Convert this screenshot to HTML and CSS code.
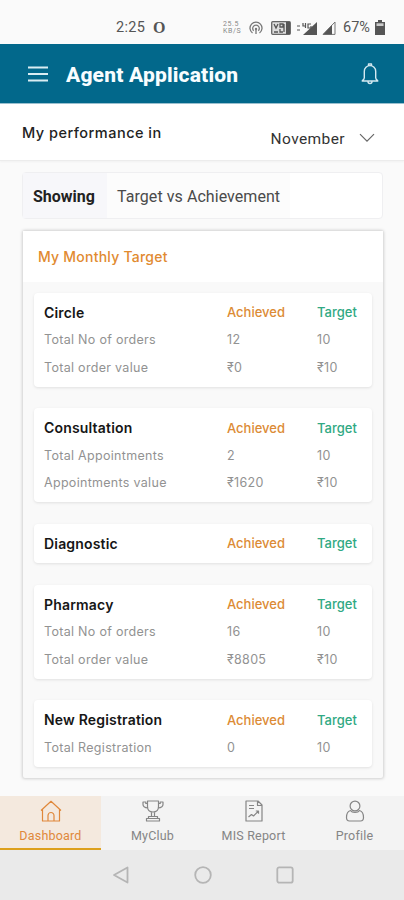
FILE: index.html
```
<!DOCTYPE html>
<html lang="en">
<head>
<meta charset="utf-8">
<title>Agent Application</title>
<link rel="stylesheet" href="styles.css">
</head>
<body>
<div class="status">
  <span class="time">2:25</span><span class="opera">O</span>
  <span class="speed"><span>25.5</span><span>KB/S</span></span>
  <svg class="hotspot" width="14" height="14" viewBox="0 0 14 14" fill="none" stroke="#777" stroke-width="1.3"><path d="M3.5 12A6 6 0 1 1 10.500 12M4.700 9.800A3.300 3.300 0 1 1 9.300 9.800"/><circle cx="7" cy="8" r="1.200" fill="#777" stroke="none"/><path d="M7 9v4"/></svg>
  <svg class="volte" width="20" height="14" viewBox="0 0 20 14"><rect x=".7" y=".7" width="18.600" height="12.600" rx="1" fill="#ddd" stroke="#666" stroke-width="1.300"/><path d="M3 3l2 4 2-4M9 3h3v3H9zM3 11h4M9 8v3h3M13 3v8" fill="none" stroke="#555" stroke-width="1.300"/><path d="M15 1h4v12h-4z" fill="#555"/></svg>
  <svg class="sig1" width="22" height="14" viewBox="0 0 22 14"><path d="M21 1v13H7z" fill="#555"/><path d="M1 5h3M1 9h3M7 2v3h3M9.500 2v5M15 3h-3v4h3V5" fill="none" stroke="#555" stroke-width="1.200"/></svg>
  <svg class="sig2" width="14" height="14" viewBox="0 0 14 14"><path d="M13 1v12.400H1z" fill="none" stroke="#777"/><path d="M10 4v9.500H1z" fill="#555"/></svg>
  <span class="pct">67%</span>
  <svg class="batt" width="10" height="15" viewBox="0 0 10 15"><path d="M3 0h4v2h3v13H0V2h3z" fill="#555"/><path d="M1.500 3.300h7v2.700h-7z" fill="#ccc"/></svg>
</div>
<header class="appbar">
  <svg class="menu" width="20" height="16" viewBox="0 0 20 16" stroke="#d9edf3" stroke-width="2.200"><path d="M0 1.500h20M0 8h20M0 14.500h20"/></svg>
  <h1>Agent Application</h1>
  <svg class="bell" width="18" height="22" viewBox="0 0 18 22" fill="none" stroke="#d5eaf2" stroke-width="1.400" stroke-linejoin="round"><path d="M7.500 2.600V1h3v1.600M3.300 15.500V8.300a5.700 5.700 0 0 1 11.400 0v7.200M3.300 15.500L1.200 18h15.600l-2.100-2.500M7 18.500a2 2 0 0 0 4 0"/></svg>
</header>
<section class="period">
  <span class="label">My performance in</span>
  <span class="month">November</span>
  <svg width="16" height="10" viewBox="0 0 16 10" fill="none" stroke="#666" stroke-width="1.200"><path d="M1 1.200l7 7 7-7"/></svg>
</section>
<main>
  <div class="showing"><b>Showing</b><span>Target vs Achievement</span></div>
  <section class="panel">
    <h2>My Monthly Target</h2>
    <div class="cards">
      <article>
        <div class="row head"><span>Circle</span><span>Achieved</span><span>Target</span></div>
        <div class="row"><span>Total No of orders</span><span>12</span><span>10</span></div>
        <div class="row"><span>Total order value</span><span>₹0</span><span>₹10</span></div>
      </article>
      <article>
        <div class="row head"><span>Consultation</span><span>Achieved</span><span>Target</span></div>
        <div class="row"><span>Total Appointments</span><span>2</span><span>10</span></div>
        <div class="row"><span>Appointments value</span><span>₹1620</span><span>₹10</span></div>
      </article>
      <article>
        <div class="row head"><span>Diagnostic</span><span>Achieved</span><span>Target</span></div>
      </article>
      <article>
        <div class="row head"><span>Pharmacy</span><span>Achieved</span><span>Target</span></div>
        <div class="row"><span>Total No of orders</span><span>16</span><span>10</span></div>
        <div class="row"><span>Total order value</span><span>₹8805</span><span>₹10</span></div>
      </article>
      <article>
        <div class="row head"><span>New Registration</span><span>Achieved</span><span>Target</span></div>
        <div class="row"><span>Total Registration</span><span>0</span><span>10</span></div>
      </article>
    </div>
  </section>
</main>
<nav class="tabs">
  <a class="active"><svg width="22" height="22" viewBox="0 0 22 22"><path d="M1 10.500L11 1.300l10 9.200M2.500 9.200V21h5.500v-5.500a3 3 0 0 1 6 0V21h5.500V9.200M8 21h6"/></svg><span>Dashboard</span></a>
  <a><svg width="22" height="22" viewBox="0 0 22 22"><path d="M5.500 1h11v5.500c0 3.500-2 5.500-5.500 5.500s-5.500-2-5.500-5.500zM5.500 3.500H3.800V2H1v2.500c0 2 2 3.200 5 3.500M16.500 3.500h1.700V2H21v2.500c0 2-2 3.200-5 3.500M9.500 12v4.500M12.500 12v4.500M6.500 16.500h9v2h-9zM4.500 18.500h13V21h-13z"/></svg><span>MyClub</span></a>
  <a><svg width="22" height="22" viewBox="0 0 22 22"><path d="M3 1h12l4 4v16H3zM14.500 1v4.500H19M6 5.500h5M6 8.500h5M5.500 17l3-2.500 2 1.500 5-5M12.800 11h2.700v2.700"/></svg><span>MIS Report</span></a>
  <a><svg width="22" height="22" viewBox="0 0 22 22"><circle cx="11" cy="6" r="4.900"/><path d="M6.500 10.500c-2.800.8-4 3.500-4 7 0 2.500 1 3.500 3 3.500h11c2 0 3-1 3-3.500 0-3.500-1.200-6.200-4-7-1.500 2.600-7.500 2.600-9 0z"/></svg><span>Profile</span></a>
</nav>
<footer class="sys">
  <svg width="18" height="18" viewBox="0 0 18 18"><path d="M15.500 1.500v15L2 9z"/></svg>
  <svg width="18" height="18" viewBox="0 0 18 18"><circle cx="9" cy="9" r="7.800"/></svg>
  <svg width="18" height="18" viewBox="0 0 18 18"><rect x="1.300" y="1.300" width="15.400" height="15.400" rx="2"/></svg>
</footer>
</body>
</html>
```
FILE: styles.css
```
* { box-sizing: border-box; }
body { margin: 0; width: 404px; height: 900px; overflow: hidden; display: flex; flex-direction: column; background: #fafafa; font-family: Inter, "Noto Sans", sans-serif; color: #333; }
svg { display: block; flex: none; }
span, b, h1, h2 { white-space: nowrap; }

.status { height: 44px; flex: none; display: flex; align-items: center; padding: 11px 19px 0 116px; font: 14.5px Roboto, sans-serif; color: #555; }
.time { width: 37px; letter-spacing: .3px; }
.opera { font: bold 16px "Liberation Serif", serif; width: 70px; }
.speed { display: flex; flex-direction: column; width: 18px; font-size: 7px; line-height: 7px; color: #888; letter-spacing: .6px; margin-right: 8px; }
.hotspot { margin-right: 8px; }
.volte { margin-right: 5px; }
.sig1 { margin-right: 4px; }
.sig2 { margin-right: 7px; }
.pct { flex: 1; }

.appbar { height: 60px; flex: none; display: flex; align-items: center; padding: 0 25px 0 28px; background: #02688b; border-bottom: 1px solid #9ac0cf; }
.appbar h1 { flex: 1; margin: 2px 0 0 18px; font: 800 21px Roboto, sans-serif; letter-spacing: .18px; color: #f8fdff; }
.bell { margin-top: 1px; }

.period { height: 57px; flex: none; display: flex; align-items: flex-start; padding: 0 29px 0 22px; background: #fff; border-bottom: 1px solid #ececec; box-shadow: 0 1px 2px #0000000a; }
.label { flex: 1; margin-top: 20px; font-size: 14.500px; line-height: 18px; font-weight: 500; letter-spacing: .48px; color: #222; }
.month { margin: 26px 14px 0 0; font: 15.5px/18px Roboto, sans-serif; letter-spacing: .4px; color: #333; }
.period svg { margin-top: 29px; }

main { flex: 1; padding: 11px 21px 0 22px; min-height: 0; }
.showing { height: 47px; display: flex; align-items: stretch; border: 1px solid #efeff1; border-radius: 4px; background: #fff; font-family: Roboto, sans-serif; font-size: 16px; line-height: 48px; }
.showing b { width: 84px; padding-left: 10px; background: #f7f7fa; font-weight: 700; color: #222; }
.showing span { width: 183px; padding-left: 10px; background: #fcfcfc; letter-spacing: .06px; color: #4a4a4a; }

.panel { margin: 12px 0 0 1px; height: 547px; background: #f9f9f9; border-radius: 2px; box-shadow: 0 0 3px 1px #0000002b; }
.panel h2 { margin: 0; height: 51px; padding-left: 15px; background: #fff; font-size: 14px; line-height: 52px; font-weight: 500; letter-spacing: .23px; color: #e18a30; }
.cards { display: flex; flex-direction: column; gap: 21.700px; padding: 10.500px 11px 0; }
article { padding: 5.500px 10px; background: #fff; border-radius: 4px; box-shadow: 0 1px 3px #0000001a; }
.row { display: grid; grid-template-columns: 183px 90px 1fr; height: 27.500px; align-items: center; font-size: 12.500px; letter-spacing: .3px; color: #929292; }
.head { height: 28px; font-size: 13px; font-weight: 500; letter-spacing: 0; }
.head span:nth-child(1) { font-size: 14px; font-weight: 600; letter-spacing: .18px; color: #161616; }
.head span:nth-child(2) { color: #dc8b35; }
.head span:nth-child(3) { color: #30a983; }

.tabs { height: 54px; flex: none; display: grid; grid-template-columns: repeat(4, 1fr); background: #f3f3f3; }
.tabs a { display: flex; flex-direction: column; align-items: center; padding-top: 4px; font: 12.500px/15px Roboto, sans-serif; letter-spacing: .2px; color: #858585; }
.tabs a:not(.active) { padding-left: 2px; }
.tabs span { margin-top: 6px; }
.tabs svg { fill: none; stroke: #858585; stroke-width: 1.200; stroke-linejoin: round; }
.tabs .active { background: #f4e9de; color: #e0883a; border-bottom: 2px solid #dda01c; }
.tabs .active svg { stroke: #e0883a; }

.sys { height: 50px; flex: none; display: flex; justify-content: center; align-items: center; gap: 64px; padding-left: 2px; background: #eaeaea; }
.sys svg { fill: none; stroke: #b5b5b5; stroke-width: 1.800; stroke-linejoin: round; }
```
